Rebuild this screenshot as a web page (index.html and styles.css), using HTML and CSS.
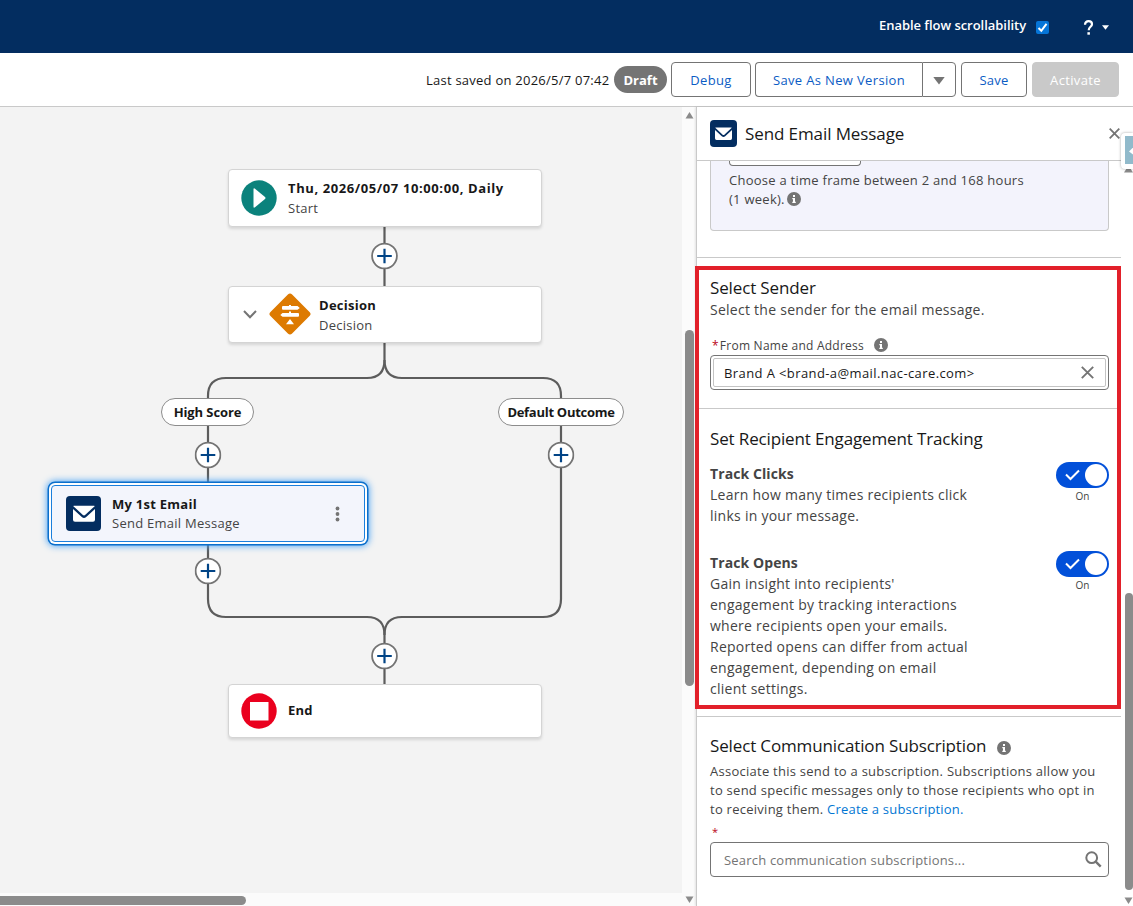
FILE: index.html
```html
<!DOCTYPE html>
<html lang="en">
<head>
<meta charset="utf-8">
<title>Flow Builder</title>
<link rel="stylesheet" href="styles.css">
</head>
<body>
<svg class="defs" width="0" height="0">
  <symbol id="mail" viewBox="0 0 24 18"><path d="M.8.6h22.4q.5.2.1.7l-10.100 9.300q-1.200 1-2.400 0L.7 1.300Q.3.8.8.600z"/><path d="M0 4.200l9.600 8.700q2.400 1.900 4.800 0L24 4.200V15.800q0 2.200-2.200 2.200H2.200Q0 18 0 15.800z"/></symbol>
  <symbol id="info" viewBox="0 0 14 14"><circle cx="7" cy="7" r="7" fill="#747474"/><path d="M6 3h2v2H6zM5.300 6H8v3.700h.8V11H5.300V9.700H6V7.200h-.7z" fill="#fff"/></symbol>
  <symbol id="plus" viewBox="0 0 27 27"><circle cx="13.500" cy="13.500" r="12.400" fill="#fff" stroke="#747474" stroke-width="1.800"/><path d="M13.500 6.200v14.600M6.200 13.500h14.600" stroke="#014486" stroke-width="2.200"/></symbol>
</svg>
<div class="app">
  <header class="topbar">
    <span class="topbar-label">Enable flow scrollability</span>
    <span class="checkbox"><svg viewBox="0 0 13 13" width="13" height="13"><path d="M2.500 7l2.800 2.800 5.200-7" fill="none" stroke="#fff" stroke-width="2"/></svg></span>
    <svg class="help" viewBox="0 0 12 15" width="12" height="15"><path d="M2 4.800C2 2.300 3.500 1.200 5.500 1.200S9 2.500 9 4.300C9 6.800 5.700 6.800 5.700 10.200" fill="none" stroke="#fff" stroke-width="2.200"/><path d="M4.400 12.200h2.500v2.500H4.400z" fill="#fff"/></svg>
    <svg class="help-caret" viewBox="0 0 8 5" width="7" height="5"><path d="M0 0h8L4 5z" fill="#fff"/></svg>
  </header>
  <div class="toolbar">
    <span class="saved">Last saved on 2026/5/7 07:42</span>
    <span class="badge"><span>Draft</span></span>
    <button class="btn debug"><span>Debug</span></button>
    <div class="btn-group">
      <button class="btn version"><span>Save As New Version</span></button>
      <button class="btn more"><svg viewBox="0 0 12 8" width="12" height="8"><path d="M.3 0h11.400L6 7.500z" fill="#747474"/></svg></button>
    </div>
    <button class="btn save"><span>Save</span></button>
    <button class="btn activate"><span>Activate</span></button>
  </div>
  <main class="workspace">
    <div class="canvas">
      <svg class="lines" width="682" height="786" viewBox="0 107 682 786">
        <g fill="none" stroke="#5c5c5c" stroke-width="2.200">
          <path d="M384.500 226V287M384.500 343V360Q384.500 378 367 378H226Q208 378 208 396V599Q208 617 226 617H367Q384.500 617 384.500 635V685"/>
          <path d="M384.500 360Q384.500 378 402 378H543Q561 378 561 396V599Q561 617 543 617H402Q384.500 617 384.500 635"/>
        </g>
        <use href="#plus" x="371" y="242.500" width="27" height="27"/>
        <use href="#plus" x="194.500" y="441.500" width="27" height="27"/>
        <use href="#plus" x="547.500" y="441.500" width="27" height="27"/>
        <use href="#plus" x="194.500" y="557.500" width="27" height="27"/>
        <use href="#plus" x="371" y="642.500" width="27" height="27"/>
      </svg>
      <div class="node start">
        <svg width="36" height="36" viewBox="0 0 36 36"><circle cx="18" cy="18" r="17.700" fill="#0b827c"/><path d="M12.500 9.500v17q0 2 1.500.8L24 19q1-1 0-2L14 8.700q-1.500-1.200-1.500.8z" fill="#fff"/></svg>
        <div class="node-text"><b class="t-start">Thu, 2026/05/07 10:00:00, Daily</b><span>Start</span></div>
      </div>
      <div class="node decision">
        <svg class="chev" width="14" height="9" viewBox="0 0 14 9"><path d="M1 1l6 6.200L13 1" fill="none" stroke="#747474" stroke-width="2"/></svg>
        <svg class="diamond" width="42" height="42" viewBox="0 0 42 42"><rect x="5.700" y="5.700" width="30.600" height="30.600" rx="3" transform="rotate(45 21 21)" fill="#dd7a01"/><path d="M20 12h2v1h6.500l2.300 1.900-2.300 1.900H14q-1 0-1-1V14q0-1 1-1h6zM13.500 20H20v-1.500h2V20h7q1 0 1 1v1.800q0 1-1 1H13.500l-2.200-1.900zM21 26l4 5.200h-8z" fill="#fff"/></svg>
        <div class="node-text"><b>Decision</b><span>Decision</span></div>
      </div>
      <div class="pill high"><span>High Score</span></div>
      <div class="pill default"><span>Default Outcome</span></div>
      <div class="node email">
        <span class="mail-box"><svg width="22" height="17"><use href="#mail"/></svg></span>
        <div class="node-text"><b>My 1st Email</b><span>Send Email Message</span></div>
        <svg class="dots" width="5" height="16" viewBox="0 0 5 16"><g fill="#747474"><circle cx="2.500" cy="2.500" r="1.900"/><circle cx="2.500" cy="8" r="1.900"/><circle cx="2.500" cy="13.500" r="1.900"/></g></svg>
      </div>
      <div class="node end">
        <svg width="36" height="36" viewBox="0 0 36 36"><circle cx="18" cy="18" r="17.700" fill="#ea001e"/><path d="M9 9h18.500v18.500H9z" fill="#fff"/></svg>
        <div class="node-text"><b>End</b></div>
      </div>
    </div>
    <div class="vscroll">
      <svg class="arrow" width="9" height="8" viewBox="0 0 9 8"><path d="M4.500 1L8.500 7.500h-8z"/></svg>
      <div class="thumb"></div>
      <svg class="arrow down" width="9" height="8" viewBox="0 0 9 8"><path d="M4.500 7L8.500.5h-8z"/></svg>
    </div>
    <div class="hscroll"><div class="hthumb"></div></div>
    <aside class="panel">
      <div class="panel-head">
        <span class="mail-box small"><svg width="17" height="13"><use href="#mail"/></svg></span>
        <h1>Send Email Message</h1>
        <svg class="close" width="11" height="11" viewBox="0 0 11 11"><path d="M.7.7l9.600 9.600M10.300.7L.7 10.300" stroke="#747474" stroke-width="1.800"/></svg>
      </div>
      <div class="panel-body">
        <div class="sections">
          <section class="timeframe">
            <div class="tf-box">
              <div class="tf-input"></div>
              <p>Choose a time frame between 2 and 168 hours<br>(1 week).<svg class="info" width="14" height="14"><use href="#info"/></svg></p>
            </div>
          </section>
          <section class="sender">
            <h2>Select Sender</h2>
            <p class="desc">Select the sender for the email message.</p>
            <div class="label"><i>*</i><span>From Name and Address</span><svg width="14" height="14"><use href="#info"/></svg></div>
            <div class="combo"><div class="combo-in"><span>Brand A &lt;brand-a@mail.nac-care.com&gt;</span><svg width="13" height="13" viewBox="0 0 13 13"><path d="M.8.8l11.400 11.400M12.200.8L.8 12.200" stroke="#747474" stroke-width="1.900"/></svg></div></div>
          </section>
          <section class="tracking">
            <h2>Set Recipient Engagement Tracking</h2>
            <div class="track-row clicks">
              <p class="desc"><b>Track Clicks</b><br>Learn how many times recipients click<br>links in your message.</p>
              <div class="toggle-wrap"><div class="toggle"><svg width="15" height="12" viewBox="0 0 15 12"><path d="M1 5.500l4.500 4.500L14 1.500" fill="none" stroke="#fff" stroke-width="2"/></svg><span class="knob"></span></div><span class="on">On</span></div>
            </div>
            <div class="track-row">
              <p class="desc"><b>Track Opens</b><br>Gain insight into recipients'<br>engagement by tracking interactions<br>where recipients open your emails.<br>Reported opens can differ from actual<br>engagement, depending on email<br>client settings.</p>
              <div class="toggle-wrap"><div class="toggle"><svg width="15" height="12" viewBox="0 0 15 12"><path d="M1 5.500l4.500 4.500L14 1.500" fill="none" stroke="#fff" stroke-width="2"/></svg><span class="knob"></span></div><span class="on">On</span></div>
            </div>
          </section>
          <section class="subscription">
            <h2><span>Select Communication Subscription</span><svg width="14" height="14"><use href="#info"/></svg></h2>
            <p class="small-desc">Associate this send to a subscription. Subscriptions allow you<br>to send specific messages only to those recipients who opt in<br>to receiving them. <a>Create a subscription.</a></p>
            <i class="req">*</i>
            <div class="search"><span>Search communication subscriptions...</span><svg width="17" height="17" viewBox="0 0 17 17"><circle cx="6.700" cy="6.700" r="5.400" fill="none" stroke="#747474" stroke-width="2"/><path d="M10.700 10.700l5 5" stroke="#747474" stroke-width="2.400"/></svg></div>
          </section>
        </div>
        <div class="pscroll">
          <svg class="arrow" width="9" height="8" viewBox="0 0 9 8"><path d="M4.500.5L9 7.500H0z"/></svg>
          <div class="pthumb"></div>
          <svg class="arrow pdown" width="9" height="8" viewBox="0 0 9 8"><path d="M4.500 7L8.500.5h-8z"/></svg>
        </div>
      </div>
      <div class="side-tab"><svg width="10" height="28" viewBox="0 0 10 28"><path d="M10 9.500V20L4 15.500z" fill="#fff"/></svg></div>
      <div class="callout"></div>
    </aside>
  </main>
</div>
</body>
</html>
```
FILE: styles.css
```css
* { box-sizing: border-box; }
body { margin: 0; font-family: "Open Sans", "Noto Sans", sans-serif; font-size: 13px; color: #181818; }
h1, h2, p { margin: 0; font-weight: 400; }
i { font-style: normal; }
b { font-weight: 700; }
.defs { position: absolute; }
.app { width: 1133px; height: 906px; overflow: hidden; display: flex; flex-direction: column; background: #fff; white-space: nowrap; }

.topbar { height: 53px; flex: none; background: #032d60; display: flex; align-items: center; justify-content: flex-end; padding-right: 24px; color: #fff; }
.topbar-label { font-weight: 600; width: 148px; margin: 0 9px 4px 0; letter-spacing: -.04px; }
.checkbox { width: 13px; height: 13px; background: #0675d8; border-radius: 2px; margin: 2px 34px 0 0; display: flex; }
.help { margin: 2px 7px 0 0; }
.help-caret { margin-top: 2px; }

.toolbar { height: 54px; flex: none; border-bottom: 1px solid #c9c9c9; display: flex; align-items: center; justify-content: flex-end; padding-right: 14px; }
.saved { width: 188px; letter-spacing: .24px; }
.badge { width: 53px; height: 27px; border-radius: 14px; background: #747474; color: #fff; font-weight: 700; display: flex; align-items: center; justify-content: center; margin-right: 4px; }
.btn { height: 35px; padding: 0; font: inherit; letter-spacing: .35px; border: 1px solid #747474; border-radius: 4px; background: #fff; color: #0b5cc4; display: flex; align-items: center; justify-content: center; }
.btn-group { display: flex; margin: 0 5px 0 4px; }
.debug { width: 80px; }
.version { width: 167px; border-radius: 4px 0 0 4px; border-right: 0; }
.more { width: 34px; border-radius: 0 4px 4px 0; padding-top: 2px; }
.save { width: 66px; margin-right: 5px; letter-spacing: .2px; }
.activate { width: 87px; background: #c9c9c9; border-color: #c9c9c9; color: #fff; }

.workspace { flex: 1; min-height: 0; display: grid; grid-template: 786px 13px / 682px 14px 437px; }
.canvas { position: relative; background: #f3f3f3; }
.lines { display: block; }
.node { position: absolute; left: 228px; width: 314px; background: #fff; border: 1px solid #d4d4d4; border-radius: 4px; box-shadow: 0 2px 3px rgba(0,0,0,.12); display: flex; align-items: center; padding-left: 12px; }
.node-text { display: flex; flex-direction: column; line-height: 20px; margin-left: 11px; letter-spacing: .26px; }
.node-text span { color: #444; }
.node-text .t-start { letter-spacing: .6px; }
.start { top: 62px; height: 58px; }
.decision { top: 179px; height: 57px; padding-left: 14px; }
.decision .chev { margin-right: 12px; }
.decision .diamond { margin-bottom: 2px; }
.decision .node-text { margin-left: 8px; }
.end { top: 577px; height: 54px; }
.end .node-text { margin-bottom: 2px; }
.email { left: 51px; top: 378px; height: 57px; background: #f3f5fc; border: 1px solid #1b7fdc; box-shadow: 0 0 0 2px #fff, 0 0 0 3.500px #0b6fcb, 0 0 7px 4px #4aa3f5; padding: 0 28px 0 14px; }
.email .node-text { line-height: 19px; flex: 1; }
.mail-box { width: 35px; height: 35px; border-radius: 4px; background: #032d60; fill: #fff; display: flex; align-items: center; justify-content: center; }
.mail-box.small { width: 27px; height: 27px; }
.dots { margin-right: -4px; }
.pill { position: absolute; top: 291px; height: 28px; border: 1px solid #8c8c8c; border-radius: 14px; background: #fff; font-weight: 700; display: flex; align-items: center; justify-content: center; }
.high { left: 161px; width: 93px; letter-spacing: -.1px; }
.default { left: 498px; width: 126px; letter-spacing: -.28px; }

.vscroll { grid-row: 1 / 3; grid-column: 2; background: #fbfbfb; display: flex; flex-direction: column; align-items: center; padding-top: 4px; }
.arrow { fill: #8b8b8b; flex: none; }
.thumb { width: 9px; height: 356px; border-radius: 5px; background: #8b8b8b; margin-top: 211px; }
.down { margin-top: 210px; }
.hscroll { background: #fbfbfb; padding-top: 3px; }
.hthumb { width: 246px; height: 9px; border-radius: 0 5px 5px 0; background: #8b8b8b; }

.panel { grid-row: 1 / 3; grid-column: 3; position: relative; border-left: 1px solid #c9c9c9; box-shadow: -1px 0 2px rgba(0,0,0,.1); background: #fff; display: flex; flex-direction: column; }
.panel-head { height: 54px; flex: none; border-bottom: 1px solid #c9c9c9; display: flex; align-items: center; padding: 0 13px; }
h1 { font-size: 17px; margin-left: 8px; flex: 1; letter-spacing: -.1px; }
.panel-body { flex: 1; display: flex; min-height: 0; }
.sections { width: 424px; }
section { padding: 0 12px 0 13px; border-bottom: 1px solid #c9c9c9; }
.timeframe { height: 97px; }
.tf-box { height: 70px; background: #f3f3fc; border: 1px solid #c9c9c9; border-top: 0; border-radius: 0 0 4px 4px; padding-left: 18px; color: #444; }
.tf-input { width: 132px; height: 5px; border: 1px solid #747474; border-top: 0; border-radius: 0 0 4px 4px; background: #fff; margin-bottom: 5px; }
.tf-box p { line-height: 19px; letter-spacing: .26px; }
.info { vertical-align: -2px; margin-left: 2px; }
.sender { height: 151px; padding-top: 19px; }
h2 { font-size: 17px; line-height: 22px; letter-spacing: -.14px; }
.desc { font-size: 14px; line-height: 21px; color: #444; letter-spacing: .26px; }
.desc b { letter-spacing: .09px; }
.label { display: flex; align-items: center; height: 18px; margin-top: 16px; margin-bottom: 1px; font-size: 12px; color: #444; letter-spacing: .24px; }
.label i { color: #ba0517; margin: 0 1px 0 2px; }
.label svg { margin-left: 10px; }
.combo { height: 35px; border: 1px solid #747474; border-radius: 4px; padding: 2px; background: #fff; letter-spacing: .4px; }
.combo-in { height: 29px; border: 1px solid #c4c4c4; border-radius: 2px; display: flex; align-items: center; justify-content: space-between; padding: 0 11px 0 10px; }
.tracking { height: 308px; padding-top: 19px; }
.track-row { display: flex; justify-content: space-between; height: 89px; }
.track-row .desc { padding-top: 1px; }
.clicks { margin-top: 12px; }
.toggle-wrap { display: flex; flex-direction: column; align-items: center; }
.toggle { width: 53px; height: 26px; border-radius: 13px; background: #0250d9; display: flex; align-items: center; justify-content: space-between; padding: 0 2px 0 9px; }
.knob { width: 22px; height: 22px; border-radius: 50%; background: #fff; }
.on { font-size: 10px; line-height: 16px; color: #444; }
.subscription { border: 0; padding-top: 18px; }
.subscription h2 { display: flex; align-items: center; }
.subscription h2 svg { margin: 3px 0 0 11px; }
.small-desc { line-height: 19px; margin-top: 5px; color: #444; letter-spacing: .26px; }
.small-desc a { color: #0176d3; letter-spacing: .2px; }
.req { display: block; color: #ba0517; font-size: 11px; line-height: 14px; height: 22px; padding: 6px 0 0 2px; }
.search { height: 35px; border: 1px solid #747474; border-radius: 4px; display: flex; align-items: center; justify-content: space-between; padding: 0 6px 0 13px; color: #747474; margin-top: 1px; letter-spacing: .2px; }
.pscroll { width: 12px; display: flex; flex-direction: column; align-items: flex-end; padding-top: 4px; }
.pthumb { width: 8px; height: 297px; border-radius: 5px; background: #8b8b8b; margin-top: 420px; }
.pdown { margin-top: 7px; }
.side-tab { position: absolute; right: 0; top: 26px; width: 12px; height: 36px; background: #fff; border-radius: 4px 0 0 4px; box-shadow: 0 0 3px rgba(0,0,0,.35); padding: 3px 0 0 4px; clip-path: inset(-4px 0 -4px -4px); }
.side-tab svg { display: block; background: #91bacb; }
.callout { position: absolute; left: -2px; top: 159px; width: 426px; height: 443px; border: 4px solid #e2202a; }
```
